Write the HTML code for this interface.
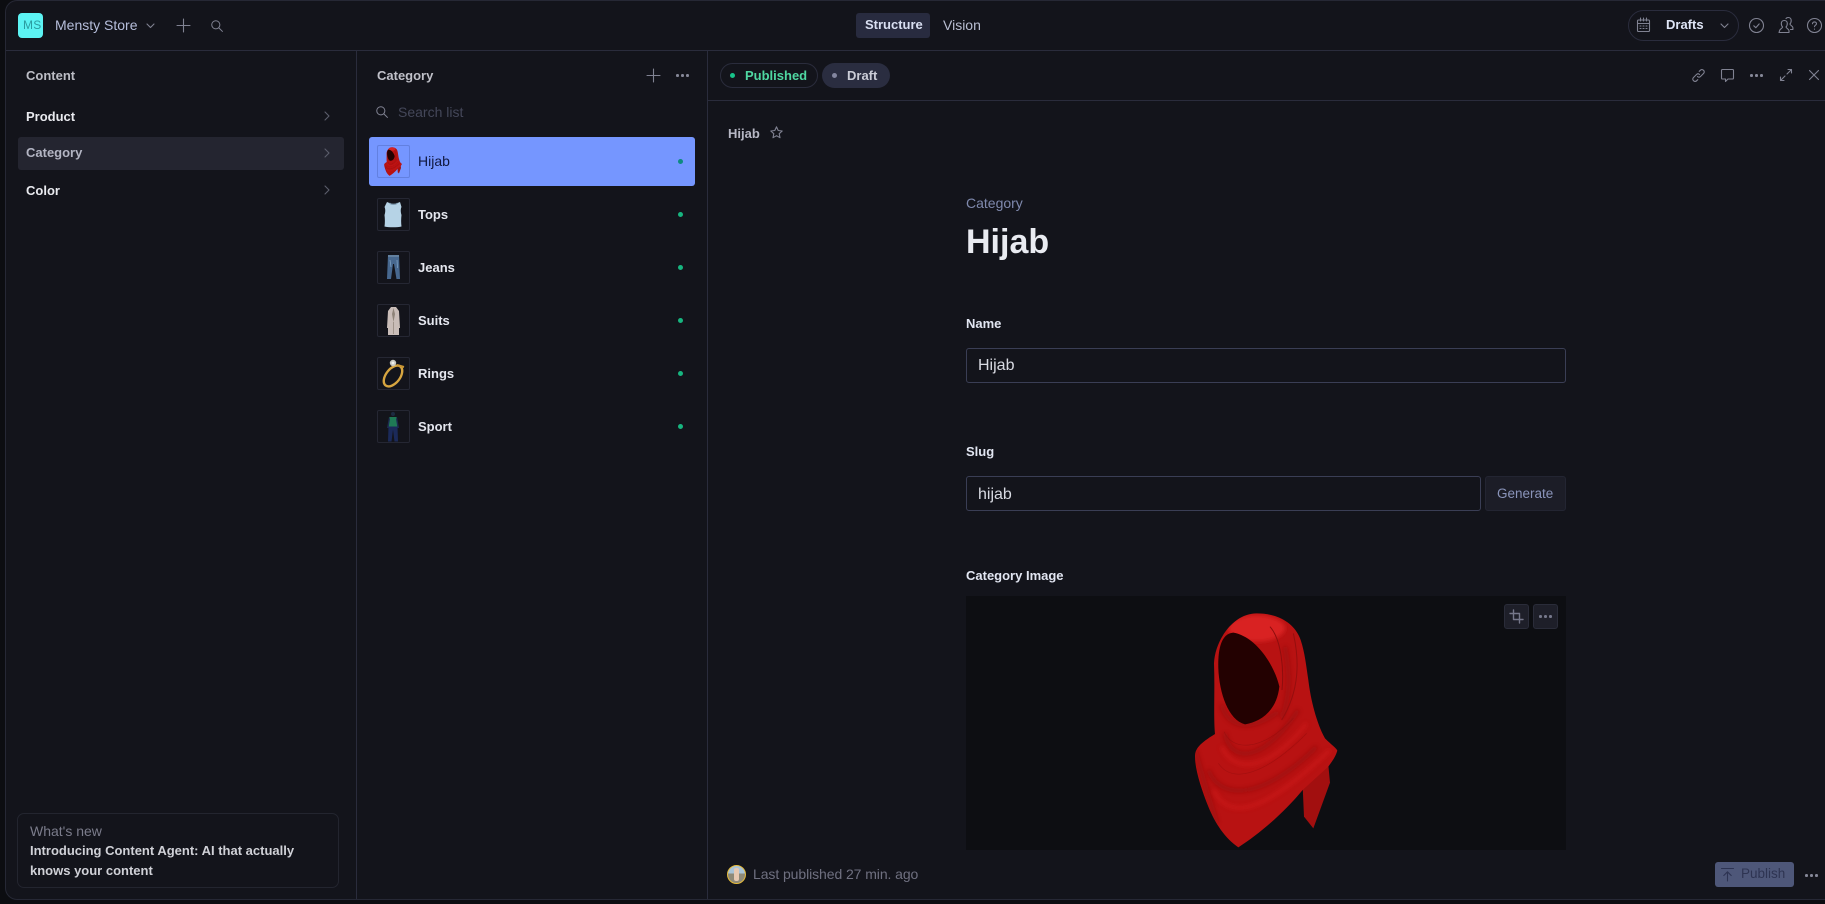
<!DOCTYPE html>
<html lang="en">
<head>
<meta charset="utf-8">
<title>Mensty Store</title>
<style>
*{box-sizing:border-box;margin:0;padding:0}
html,body{width:1825px;height:904px;overflow:hidden;background:#0c0d11}
body{font-family:"Liberation Sans",sans-serif;position:relative;color:#e4e5ec}
.app{position:absolute;left:5px;top:0;width:1830px;height:900px;background:#13141b;border-left:1px solid #262835;border-top:1px solid #262835;border-bottom:1px solid #262835;border-radius:12px 0 0 12px}
.a{position:absolute}
.t{position:absolute;white-space:nowrap;line-height:20px;height:20px;font-size:13px}
.b{font-weight:700}
.line{position:absolute;background:#2a2c3c}
.box{position:absolute;border-radius:3px}
.dot{position:absolute;width:5px;height:5px;border-radius:50%;background:#17b57f}
.dots{position:absolute;width:2.500px;height:2.500px;border-radius:50%;background:#858797;box-shadow:5px 0 #858797,10px 0 #858797}
svg.i{position:absolute;fill:none;stroke:#808292;stroke-width:1.100;stroke-linecap:round;stroke-linejoin:round;overflow:visible}
.thumb{position:absolute;left:377px;width:33px;height:33px;border:1px solid #252733;border-radius:2px;overflow:hidden}
.thumb svg{position:absolute;left:0;top:0}
</style>
</head>
<body>
<div class="app"></div>

<!-- structural lines -->
<div class="line" style="left:6px;top:50px;width:1819px;height:1px"></div>
<div class="line" style="left:356px;top:51px;width:1px;height:848px"></div>
<div class="line" style="left:707px;top:51px;width:1px;height:848px"></div>
<div class="line" style="left:708px;top:100px;width:1117px;height:1px"></div>

<!-- top bar -->
<div class="box" style="left:18px;top:13px;width:25px;height:25px;background:#5cf3f3;border-radius:4px"></div>
<div class="t" style="left:23px;top:15px;font-size:12px;color:#2b9b9f;letter-spacing:.2px">MS</div>
<div class="t" style="left:55px;top:15px;font-size:14px;color:#b6bedb">Mensty Store</div>
<svg class="i" style="left:146px;top:23px" width="9" height="6" viewBox="0 0 9 6"><path d="M1 1l3.500 3.500L8 1"/></svg>
<svg class="i" style="left:177px;top:19px" width="13" height="13" viewBox="0 0 13 13"><path d="M6.500 0v13M0 6.500h13"/></svg>
<svg class="i" style="left:211px;top:20px" width="12" height="12" viewBox="0 0 13 13"><circle cx="5.200" cy="5.200" r="4.400"/><path d="M8.400 8.400l4 4"/></svg>

<div class="box" style="left:856px;top:13px;width:74px;height:25px;background:#282b3f"></div>
<div class="t b" style="left:865px;top:15px;color:#d9dff2">Structure</div>
<div class="t" style="left:943px;top:15px;font-size:14px;color:#b9bed2">Vision</div>

<div class="box" style="left:1628px;top:10px;width:111px;height:31px;border:1px solid #2a2c3d;border-radius:16px"></div>
<svg class="i" style="left:1637px;top:18px" width="13" height="14" viewBox="0 0 13 14"><rect x=".5" y="2" width="12" height="11.500" rx="1"/><path d="M.5 5.500h12M3.500 0v3M6.500 0v3M9.500 0v3M3 8h1M6 8h1M9 8h1M3 10.500h1M6 10.500h1M9 10.500h1"/></svg>
<div class="t b" style="left:1666px;top:15px;color:#dfe5f6">Drafts</div>
<svg class="i" style="left:1720px;top:23px" width="9" height="6" viewBox="0 0 9 6"><path d="M1 1l3.500 3.500L8 1"/></svg>
<svg class="i" style="left:1749px;top:18px" width="15" height="15" viewBox="0 0 15 15"><circle cx="7.500" cy="7.500" r="7"/><path d="M4.800 7.800l2 1.900 3.400-3.800"/></svg>
<svg class="i" style="left:1778px;top:17px" width="16" height="16" viewBox="0 0 16 16"><path d="M1 15.500h10v-1.800c0-1.500-2.500-2-3-3.700 1-1 1.300-2.400 1.300-3.500 0-1.900-1.300-3-3-3s-3 1.100-3 3c0 1.100.3 2.500 1.300 3.500-.5 1.700-3 2.200-3 3.700z"/><path d="M8 1.500c.5-.6 1.300-1 2.200-1 1.700 0 3 1.100 3 3 0 1.100-.3 2.500-1.300 3.500.5 1.700 3 2.200 3 3.700v1.800h-2.400"/></svg>
<svg class="i" style="left:1807px;top:18px" width="15" height="15" viewBox="0 0 15 15"><circle cx="7.500" cy="7.500" r="7"/><path d="M5.500 5.800c0-1.200 1-1.900 2-1.900s2 .7 2 1.800c0 1.500-2 1.500-2 3"/><path d="M7.500 11v.2"/></svg>

<!-- left nav -->
<div class="t b" style="left:26px;top:66px;color:#bcbdc5">Content</div>
<div class="t b" style="left:26px;top:107px;color:#e9eaef">Product</div>
<div class="box" style="left:18px;top:137px;width:326px;height:33px;background:#242530"></div>
<div class="t b" style="left:26px;top:143px;color:#b3b5c3">Category</div>
<div class="t b" style="left:26px;top:181px;color:#e9eaef">Color</div>
<svg class="i" style="left:324px;top:111px;stroke:#5c5e6c" width="6" height="10" viewBox="0 0 6 10"><path d="M1 1l4 4-4 4"/></svg>
<svg class="i" style="left:324px;top:148px;stroke:#5c5e6c" width="6" height="10" viewBox="0 0 6 10"><path d="M1 1l4 4-4 4"/></svg>
<svg class="i" style="left:324px;top:185px;stroke:#5c5e6c" width="6" height="10" viewBox="0 0 6 10"><path d="M1 1l4 4-4 4"/></svg>

<div class="box" style="left:17px;top:813px;width:322px;height:75px;border:1px solid #23252f;border-radius:7px"></div>
<div class="t" style="left:30px;top:821px;font-size:14px;color:#7b7c8b">What's new</div>
<div class="t b" style="left:30px;top:841px;color:#d0d1d7">Introducing Content Agent: AI that actually</div>
<div class="t b" style="left:30px;top:861px;color:#d0d1d7">knows your content</div>

<!-- list pane -->
<div class="t b" style="left:377px;top:66px;color:#c0c1c9">Category</div>
<svg class="i" style="left:647px;top:69px" width="13" height="13" viewBox="0 0 13 13"><path d="M6.500 0v13M0 6.500h13"/></svg>
<div class="dots" style="left:676px;top:74px"></div>
<svg class="i" style="left:376px;top:106px" width="12" height="12" viewBox="0 0 13 13"><circle cx="5.200" cy="5.200" r="4.400"/><path d="M8.400 8.400l4 4"/></svg>
<div class="t" style="left:398px;top:102px;font-size:14px;color:#444759">Search list</div>

<div class="box" style="left:369px;top:137px;width:326px;height:49px;background:#7596ff"></div>

<svg width="0" height="0" style="position:absolute">
<defs>
<filter id="bl" x="-20%" y="-20%" width="140%" height="140%"><feGaussianBlur stdDeviation="6"/></filter>
<clipPath id="hc"><path d="M320 70C385 70 435 100 452 150C465 190 468 225 475 270C482 330 500 400 525 445C545 465 560 475 562 482C555 505 545 515 535 530L458 600C400 670 330 730 265 772C225 745 195 700 175 650C155 600 135 540 135 500C135 475 150 460 195 432C190 380 195 300 192 220C195 150 250 70 320 70Z"/></clipPath>
<symbol id="hj" viewBox="0 0 780 810">
<path d="M535 525L540 578L490 715L462 680L458 590Z" fill="#a20f0f"/>
<path d="M320 70C385 70 435 100 452 150C465 190 468 225 475 270C482 330 500 400 525 445C545 465 560 475 562 482C555 505 545 515 535 530L458 600C400 670 330 730 265 772C225 745 195 700 175 650C155 600 135 540 135 500C135 475 150 460 195 432C190 380 195 300 192 220C195 150 250 70 320 70Z" fill="#b81212"/>
<g clip-path="url(#hc)">
<ellipse cx="320" cy="115" rx="85" ry="40" fill="#d92222" filter="url(#bl)"/>
<g fill="none" stroke="#8a0c0c" stroke-width="12" filter="url(#bl)" opacity=".55">
<path d="M215 345C235 420 310 420 385 365"/>
<path d="M225 430C240 520 340 520 445 360"/>
<path d="M175 540C215 640 350 620 500 470"/>
<path d="M405 170C420 250 420 320 395 385"/>
<path d="M135 480L200 700"/>
</g>
<g fill="none" stroke="#d41e1e" stroke-width="12" filter="url(#bl)" opacity=".55">
<path d="M215 470C250 550 350 550 470 400"/>
<path d="M190 600C240 700 350 660 540 480"/>
</g>
<path d="M222 425C245 480 330 490 430 385" fill="none" stroke="#950e0e" stroke-width="2" opacity=".7"/>
<path d="M205 520C245 580 340 560 470 430" fill="none" stroke="#950e0e" stroke-width="2" opacity=".6"/>
<path d="M360 110C395 150 402 240 396 300" fill="none" stroke="#8e0d0d" stroke-width="3"/>
<path d="M430 130C448 210 450 300 395 390" fill="none" stroke="#950e0e" stroke-width="3"/>
</g>
<path d="M250 128C215 130 203 175 205 235C208 310 235 390 285 403C330 395 380 365 388 290C375 230 320 140 250 128Z" fill="#230101"/>
</symbol>
</defs>
</svg>

<div class="thumb" style="top:145px;border-color:#6280e0;background:#7596ff">
<svg width="31" height="31" viewBox="0 0 31 31"><svg x="6" y="1" width="18" height="29" viewBox="130 65 435 710" preserveAspectRatio="none"><use href="#hj" width="780" height="810"/></svg></svg>
</div>
<div class="t" style="left:418px;top:151px;font-size:14px;color:#10183f">Hijab</div>
<div class="dot" style="left:678px;top:159px;background:#0d8a80"></div>

<div class="thumb" style="top:198px">
<svg width="31" height="31" viewBox="0 0 31 31"><path d="M9 3l2.500 1c2 1 6 1 8 0l2.500-1 1.500 5c-1 2-1 5 0 8 -.5 4-.5 8 0 11.500-4 1-13 1-17 0 .5-3.500.5-7.500 0-11.500 1-3 1-6 0-8z" fill="#b6d3e6"/><path d="M11.500 4c2 2 6 2 8 0" stroke="#7c9ab0" fill="none"/></svg>
</div>
<div class="t b" style="left:418px;top:205px;color:#e4e6ee">Tops</div>
<div class="dot" style="left:678px;top:212px"></div>

<div class="thumb" style="top:251px">
<svg width="31" height="31" viewBox="0 0 31 31"><path d="M10 3h11l1 24h-3.500l-2.500-15h-1l-2 15H9z" fill="#47688f"/><path d="M10 3h11v2H10z" fill="#62809f"/><path d="M12 8l1 7M19 8l.5 8" stroke="#7ea0c0" stroke-width=".8"/></svg>
</div>
<div class="t b" style="left:418px;top:258px;color:#e4e6ee">Jeans</div>
<div class="dot" style="left:678px;top:265px"></div>

<div class="thumb" style="top:304px">
<svg width="31" height="31" viewBox="0 0 31 31"><path d="M13 2h5l3 4 1 17-1 0v7H10v-7l-1 0 1-17z" fill="#c9bdb8"/><path d="M15.500 3l-1.500 6 1.500 8 1.500-8z" fill="#8e8378"/><path d="M15.500 17v12" stroke="#8e8378" stroke-width=".7"/></svg>
</div>
<div class="t b" style="left:418px;top:311px;color:#e4e6ee">Suits</div>
<div class="dot" style="left:678px;top:318px"></div>

<div class="thumb" style="top:357px">
<svg width="31" height="31" viewBox="0 0 31 31"><ellipse cx="15" cy="18" rx="7" ry="12" transform="rotate(38 15 18)" fill="none" stroke="#d6a540" stroke-width="2.400"/><path d="M19 7l7 2" stroke="#c99634" stroke-width="2"/><circle cx="15" cy="5" r="3.200" fill="#c8c8c0"/><circle cx="15" cy="5" r="1.400" fill="#f1f1ec"/></svg>
</div>
<div class="t b" style="left:418px;top:364px;color:#e4e6ee">Rings</div>
<div class="dot" style="left:678px;top:371px"></div>

<div class="thumb" style="top:410px">
<svg width="31" height="31" viewBox="0 0 31 31"><circle cx="15" cy="3" r="2" fill="#1c2a40"/><path d="M11.500 6h7l1 10h-9z" fill="#1f7a55"/><path d="M11 6l-2 11h1.500l1.500-9zM19 6l2 11h-1.500l-1.500-9z" fill="#1c2a50"/><path d="M10.500 15.500h9l.5 15h-3.500l-1.500-12-1.500 12H10z" fill="#1b2a5a"/></svg>
</div>
<div class="t b" style="left:418px;top:417px;color:#e4e6ee">Sport</div>
<div class="dot" style="left:678px;top:424px"></div>

<!-- document pane -->
<div class="box" style="left:720px;top:63px;width:98px;height:25px;border:1px solid #2a2c3c;border-radius:13px"></div>
<div class="a" style="left:730px;top:73px;width:5px;height:5px;border-radius:50%;background:#17c389"></div>
<div class="t b" style="left:745px;top:66px;color:#4fd8a2">Published</div>
<div class="box" style="left:822px;top:63px;width:68px;height:25px;background:#2a2d40;border-radius:13px"></div>
<div class="a" style="left:832px;top:73px;width:5px;height:5px;border-radius:50%;background:#83869f"></div>
<div class="t b" style="left:847px;top:66px;color:#cbcdd8">Draft</div>

<svg class="i" style="left:1692px;top:69px" width="13" height="13" viewBox="0 0 13 13"><path d="M5.500 7.500c1 1 2.200.8 3 0l3-3c1-1 1-2.300 0-3.200s-2.200-1-3.200 0L7.200 2.400"/><path d="M7.500 5.500c-1-1-2.200-.8-3 0l-3 3c-1 1-1 2.300 0 3.200s2.200 1 3.200 0l1.100-1.100"/></svg>
<svg class="i" style="left:1721px;top:69px" width="13" height="13" viewBox="0 0 13 13"><path d="M1.500.5h10c.6 0 1 .4 1 1v7.500c0 .6-.4 1-1 1H7l-2.500 2.500V10H1.500c-.6 0-1-.4-1-1V1.500c0-.6.4-1 1-1z"/></svg>
<div class="dots" style="left:1750px;top:74px"></div>
<svg class="i" style="left:1780px;top:69px" width="12" height="12" viewBox="0 0 12 12"><path d="M7 5l4.500-4.500M8 .5h3.500V4M5 7L.5 11.500M.5 8v3.500H4"/></svg>
<svg class="i" style="left:1809px;top:70px" width="10" height="10" viewBox="0 0 10 10"><path d="M.5.5l9 9M9.500.5l-9 9"/></svg>

<div class="t b" style="left:728px;top:124px;color:#b6b7c4">Hijab</div>
<svg class="i" style="left:770px;top:126px" width="13" height="13" viewBox="0 0 13 13"><path d="M6.500.8l1.700 3.700 4 .5-3 2.700.8 4-3.500-2-3.500 2 .8-4-3-2.700 4-.5z"/></svg>

<div class="t" style="left:966px;top:193px;font-size:14px;color:#7f89ad">Category</div>
<div class="a b" style="left:966px;top:222px;font-size:34px;line-height:40px;color:#e9ebf1;white-space:nowrap">Hijab</div>

<div class="t b" style="left:966px;top:314px;color:#e2e6f2">Name</div>
<div class="box" style="left:966px;top:348px;width:600px;height:35px;border:1px solid #3a3e55;background:#13141b"></div>
<div class="t" style="left:978px;top:356px;font-size:16px;color:#d8dae2">Hijab</div>

<div class="t b" style="left:966px;top:442px;color:#e2e6f2">Slug</div>
<div class="box" style="left:966px;top:476px;width:515px;height:35px;border:1px solid #3a3e55;background:#13141b"></div>
<div class="t" style="left:978px;top:485px;font-size:16px;color:#d8dae2">hijab</div>
<div class="box" style="left:1485px;top:476px;width:81px;height:35px;border:1px solid #232532;background:#1c1d27"></div>
<div class="t" style="left:1497px;top:484px;font-size:13.500px;color:#8a94ba">Generate</div>

<div class="t b" style="left:966px;top:566px;color:#e2e6f2">Category Image</div>
<div class="a" style="left:966px;top:596px;width:600px;height:254px;background:#0d0e12"></div>
<svg class="a" style="left:1150px;top:590px" width="260" height="270" viewBox="0 0 780 810"><use href="#hj" width="780" height="810"/></svg>

<div class="box" style="left:1504px;top:604px;width:25px;height:25px;background:#1e1f29;border:1px solid #2a2c39"></div>
<svg class="i" style="left:1510px;top:610px;stroke:#75778a;stroke-width:1.400" width="13" height="13" viewBox="0 0 13 13"><path d="M3.500 0v9.500H13M0 3.500h9.500V13"/></svg>
<div class="box" style="left:1533px;top:604px;width:25px;height:25px;background:#1e1f29;border:1px solid #2a2c39"></div>
<div class="dots" style="left:1539px;top:615px;background:#75778a;box-shadow:5px 0 #75778a,10px 0 #75778a"></div>

<!-- footer -->
<div class="a" style="left:727px;top:865px;width:19px;height:19px;border-radius:50%;background:linear-gradient(#a9c4d8 0 45%,#8f8a78 45% 100%);border:1.500px solid #e6bb3a;overflow:hidden"><div class="a" style="left:6px;top:2px;width:5px;height:13px;background:#e7c9b2;border-radius:2px"></div></div>
<div class="t" style="left:753px;top:864px;font-size:14px;letter-spacing:-.08px;color:#6f7080">Last published 27 min. ago</div>

<div class="box" style="left:1715px;top:862px;width:79px;height:25px;background:#4e5779;border-radius:3px"></div>
<svg class="i" style="left:1721px;top:868px;stroke:#2d3352" width="13" height="13" viewBox="0 0 13 13"><path d="M.5.5h12M6.500 13V4M2.800 7.500l3.700-3.700 3.700 3.700"/></svg>
<div class="t" style="left:1741px;top:864px;font-size:13.500px;color:#2e3452">Publish</div>
<div class="dots" style="left:1805px;top:874px"></div>
</body>
</html>
